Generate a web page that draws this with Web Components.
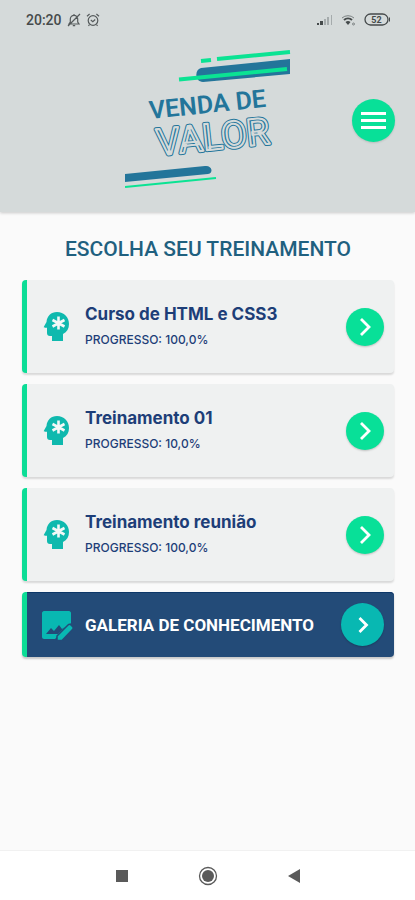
<!DOCTYPE html>
<html lang="pt-BR">
<head>
<meta charset="utf-8">
<meta name="viewport" content="width=device-width, initial-scale=1">
<title>Venda de Valor</title>
<style>
  html, body { margin: 0; min-height: 100%; }
  body { background: #fafafa; font-family: Inter, "Open Sans", sans-serif; }
</style>
</head>
<body>
<training-app></training-app>

<script>
const define = (name, html, setup) => {
  const template = document.createElement('template');
  template.innerHTML = html;
  customElements.define(name, class extends HTMLElement {
    constructor() {
      super();
      this.attachShadow({ mode: 'open' }).append(template.content.cloneNode(true));
    }
    connectedCallback() { if (setup) setup(this, this.shadowRoot); }
  });
};

define('status-bar', `
<style>
  :host { display: flex; align-items: center; justify-content: space-between; height: 40px; padding: 0 24px 0 26px; color: #454a4b; font: 500 14px/20px Roboto, sans-serif; }
  div { display: flex; align-items: center; gap: 5px; }
  .right { gap: 8px; }
  svg { display: block; }
</style>
<div>
  <span>20:20</span>
  <svg width="14" height="14" viewBox="0 0 14 14" fill="none" stroke="#555a5b" stroke-width="1.2" aria-hidden="true"><path d="M2 11h10l-1.300-2V6a3.700 3.700 0 0 0-7.400 0v3zM5.800 12.700h2.400M7 2.200V1M1 13 13 1"/></svg>
  <svg width="14" height="14" viewBox="0 0 14 14" fill="none" stroke="#555a5b" stroke-width="1.200" aria-hidden="true"><circle cx="7" cy="7.500" r="4.800"/><path d="M1 3.200 3.600 1M13 3.200 10.400 1M4.800 7l2 1.600L9.200 6.500M3.500 11.500l-1 1.300M10.500 11.500l1 1.300"/></svg>
</div>
<div class="right">
  <svg width="16" height="12" viewBox="0 0 16 12" aria-hidden="true"><path fill="#454a4b" d="M0 9h2v2H0zM3 7h3v4H3z"/><path fill="#a5abac" d="M7 5h2v6H7zM10 3h2v8h-2zM14 1h1v10h-1z"/></svg>
  <svg width="15" height="12" viewBox="0 0 15 12" fill="none" stroke="#454a4b" aria-hidden="true"><path stroke="#7b8182" d="M1 4a9 9 0 0 1 12 0"/><path stroke-width="2" d="M3 6a6 6 0 0 1 8 0"/><path fill="#454a4b" stroke="none" d="M4.500 8a4 4 0 0 1 5 0L7 11z"/><circle cx="12.500" cy="10" r="1" stroke="#7b8182"/></svg>
  <svg width="27" height="14" viewBox="0 0 27 14" role="img" aria-label="52"><rect x="1" y="1" width="23" height="11" rx="5.500" fill="none" stroke="#454a4b" stroke-width="1.300"/><path d="M25.500 4.500v4" stroke="#454a4b"/><text x="12.500" y="10" text-anchor="middle" font-family="Roboto, sans-serif" font-weight="700" font-size="9" fill="#454a4b">52</text></svg>
</div>`);

define('brand-logo', `
<style>:host { display: block; } svg { display: block; }</style>
<svg width="166" height="140" viewBox="0 0 166 140" role="img" aria-label="Venda de Valor">
  <g fill="#23759a">
    <path d="M76 18 165 9v15L78 32c-8 0-9-12-2-14z"/>
    <path d="M0 124 80 116c7-1 9 7 3 8L0 132z"/>
  </g>
  <g stroke="#0be393" fill="none">
    <path stroke-width="4" d="M76 11l10-1M92 9l73-7"/>
    <path stroke-width="4" d="M54 29.500 162 19"/>
    <path stroke-width="2" d="M0 137l91-9"/>
  </g>
  <g transform="rotate(-6 83 70)" text-anchor="middle" fill="#23759a" font-family="Roboto, sans-serif">
    <text x="84" y="63" font-weight="600" font-size="25">VENDA DE</text>
    <g font-size="37" stroke-linejoin="round">
      <text x="86" y="100" stroke="#23759a" stroke-width="4">VALOR</text>
      <text x="86" y="100" stroke="#d5dada" stroke-width="2" aria-hidden="true">VALOR</text>
    </g>
  </g>
</svg>`);

define('app-header', `
<style>
  :host { display: block; background: #d5dada; padding-bottom: 22px; box-shadow: 0 1px 3px #0003; }
  .row { display: grid; grid-template-columns: 1fr auto 1fr; align-items: center; padding: 10px 20px 0; }
  brand-logo { grid-column: 2; }
  button { justify-self: end; width: 43px; height: 43px; padding: 0; border: 0; border-radius: 50%; background: #08e098; display: grid; place-items: center; box-shadow: 0 1px 2px #0002; }
</style>
<status-bar></status-bar>
<div class="row">
  <brand-logo></brand-logo>
  <button type="button" aria-label="Menu"><svg width="25" height="19" viewBox="0 0 25 19" aria-hidden="true"><path stroke="#fff" stroke-width="3" d="M0 2.500h25M0 9.500h25M0 16.500h25"/></svg></button>
</div>`);

define('go-button', `
<style>
  :host { display: block; flex: none; }
  button { display: grid; place-items: center; width: var(--go-size, 38px); height: var(--go-size, 38px); padding: 0; border: 0; border-radius: 50%; background: var(--go-color, #08e098); box-shadow: 0 1px 2px #0003; }
</style>
<button type="button"><svg width="24" height="24" viewBox="0 0 24 24" aria-hidden="true"><path fill="none" stroke="#fff" stroke-width="2.800" d="m8 4 8 8-8 8"/></svg></button>`,
(host, root) => {
  root.querySelector('button').setAttribute('aria-label', host.getAttribute('label') || 'Abrir');
  if (host.hasAttribute('compact')) root.querySelector('path').setAttribute('d', 'm8.500 5 7 7-7 7');
});

define('training-card', `
<style>
  :host { display: flex; align-items: center; box-sizing: border-box; min-height: 93px; padding: 0 10px 0 16px; border-left: 5px solid #0bdd96; border-radius: 4px; background: #eff1f1; box-shadow: 0 2px 2px #0002; color: #1d3e78; }
  .icon { flex: none; width: 28px; margin-right: 14px; }
  .text { flex: 1; min-width: 0; }
  h2 { margin: 0; font-weight: 700; font-size: 17px; line-height: 26px; }
  p { margin: 0; font-weight: 500; font-size: 12px; line-height: 26px; }
</style>
<svg class="icon" width="28" height="32" viewBox="0 0 28 32" aria-hidden="true">
  <path fill="#0fb9ae" d="M14 1C8 1 4 5 3.500 11L1 15.500c-.4.800 0 1.200.8 1.200H4V22c0 2 1 3 3 3h2v5h11v-7c4-2 6-5.500 6-10C26 6 21 1 14 1z"/>
  <path stroke="#f4f8f7" stroke-width="2.600" d="M15.500 5.500v13M9.500 9l12 6.500M21.500 9l-12 6.500"/>
</svg>
<div class="text"><h2><slot name="title"></slot></h2><p><slot name="progress"></slot></p></div>
<go-button></go-button>`,
(host, root) => {
  const label = 'Abrir ' + host.querySelector('[slot=title]').textContent;
  root.querySelector('go-button').shadowRoot.querySelector('button').setAttribute('aria-label', label);
});

define('gallery-card', `
<style>
  :host { --go-size: 43px; --go-color: #08b8b2; display: flex; align-items: center; box-sizing: border-box; min-height: 65px; padding: 0 10px 0 14px; border-left: 5px solid #0bdd96; border-radius: 4px; background: #234b78; box-shadow: 0 2px 2px #0003, inset 0 1px #0d3768; color: #fff; }
  svg { flex: none; margin-right: 12px; }
  h2 { flex: 1; min-width: 0; margin: 0; font: 700 17px/24px Roboto, sans-serif; }
</style>
<svg width="32" height="32" viewBox="0 0 32 32" aria-hidden="true">
  <path fill="#08b8b2" d="M3 2h25c1 0 2 1 2 2v10L14 30H3c-1 0-2-1-2-2V4c0-1 1-2 2-2z"/>
  <path fill="#234b78" d="m5 25 5-6 3 3 5-6 3 4 3-2-7 7z"/>
  <path fill="#08b8b2" stroke="#234b78" stroke-width="1.500" d="m16 27 11-11c1-1 2-1 3 0l1.500 1.500c1 1 1 2 0 3L21 31.500h-5z"/>
</svg>
<h2><slot></slot></h2>
<go-button compact label="Abrir galeria de conhecimento"></go-button>`);

define('nav-bar', `
<style>
  :host { display: flex; justify-content: center; align-items: center; gap: 46px; height: 49px; border-top: 1px solid #f1f1f1; background: #fff; }
  button { display: grid; place-items: center; width: 40px; height: 40px; padding: 0; border: 0; background: none; }
</style>
<button type="button" aria-label="Recentes"><svg width="20" height="20"><path fill="#5a5a5a" d="M4 4h12v12H4z"/></svg></button>
<button type="button" aria-label="Início"><svg width="20" height="20"><circle cx="10" cy="10" r="8.500" fill="none" stroke="#5a5a5a" stroke-width="1.300"/><circle cx="10" cy="10" r="6" fill="#5a5a5a"/></svg></button>
<button type="button" aria-label="Voltar"><svg width="20" height="20"><path fill="#5a5a5a" d="M16 3v14L4 10z"/></svg></button>`);

define('training-app', `
<style>
  :host { display: flex; flex-direction: column; min-height: 100vh; }
  main { flex: 1; padding: 22px 21px 20px 22px; }
  h1 { margin: 0 0 16px; text-align: center; color: #1f607f; font: 500 21px/30px Roboto, sans-serif; }
  .list { display: grid; gap: 11px; }
</style>
<app-header></app-header>
<main>
  <h1>ESCOLHA SEU TREINAMENTO</h1>
  <div class="list">
    <training-card><span slot="title">Curso de HTML e CSS3</span><span slot="progress">PROGRESSO: 100,0%</span></training-card>
    <training-card><span slot="title">Treinamento 01</span><span slot="progress">PROGRESSO: 10,0%</span></training-card>
    <training-card><span slot="title">Treinamento reunião</span><span slot="progress">PROGRESSO: 100,0%</span></training-card>
    <gallery-card>GALERIA DE CONHECIMENTO</gallery-card>
  </div>
</main>
<nav-bar></nav-bar>`);
</script>
</body>
</html>
